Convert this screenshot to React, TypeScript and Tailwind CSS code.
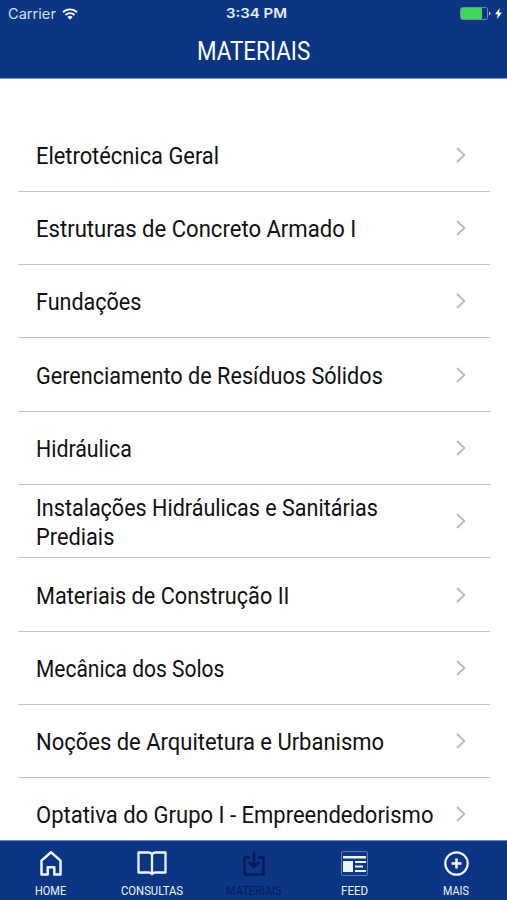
import { useLayoutEffect, useRef, useState } from "react";
import type { ReactNode } from "react";

/** A line of text condensed horizontally so that it fills the given width. */
function FitText({ text, width }: { text: string; width: number }) {
  const ref = useRef<HTMLSpanElement>(null);
  const [scale, setScale] = useState(1);
  useLayoutEffect(() => {
    if (ref.current) setScale(width / ref.current.offsetWidth);
  }, [text, width]);
  return (
    <span className="block" style={{ width }}>
      <span
        ref={ref}
        className="inline-block origin-left whitespace-nowrap"
        style={{ transform: `scaleX(${scale})` }}
      >
        {text}
      </span>
    </span>
  );
}

type Line = { text: string; width: number };

const subjects: Line[][] = [
  [{ text: "Eletrotécnica Geral", width: 183 }],
  [{ text: "Estruturas de Concreto Armado I", width: 320 }],
  [{ text: "Fundações", width: 105 }],
  [{ text: "Gerenciamento de Resíduos Sólidos", width: 347 }],
  [{ text: "Hidráulica", width: 96 }],
  [
    { text: "Instalações Hidráulicas e Sanitárias", width: 342 },
    { text: "Prediais", width: 78 },
  ],
  [{ text: "Materiais de Construção II", width: 253 }],
  [{ text: "Mecânica dos Solos", width: 188 }],
  [{ text: "Noções de Arquitetura e Urbanismo", width: 348 }],
  [{ text: "Optativa do Grupo I - Empreendedorismo", width: 397 }],
];

function StatusBar() {
  return (
    <div className="grid h-[27px] grid-cols-3 items-center pl-[8px] pr-[5px] text-[14px] leading-none">
      <div className="flex items-center gap-[6px] text-[#d5e0f4]">
        <div className="font-['Inter','Liberation_Sans',sans-serif]">
          <FitText text="Carrier" width={48} />
        </div>
        <svg width="16" height="12" viewBox="0 0 16 12" fill="none" stroke="#fff" strokeWidth="1.9">
          <path d="M1 4.2a10 10 0 0 1 14 0M3.5 7a6.4 6.4 0 0 1 9 0" />
          <path d="M5.4 9.1a3.7 3.7 0 0 1 5.2 0L8 11.7z" fill="#fff" stroke="none" />
        </svg>
      </div>
      <div className="flex justify-center pl-[3px] font-['Inter','Liberation_Sans',sans-serif] text-[13px] font-semibold text-[#e6edfb]">
        <FitText text="3:34 PM" width={61} />
      </div>
      <div className="flex items-center justify-end gap-[4px]">
        <svg width="31" height="13" viewBox="0 0 31 13">
          <rect x="0.5" y="0.5" width="27" height="12" rx="2" fill="none" stroke="#7187b9" />
          <rect x="1" y="1" width="21" height="11" rx="1" fill="#42d657" />
          <path d="M29 4.5q1.500.4 1.500 2t-1.500 2z" fill="#b5c3e0" />
        </svg>
        <svg width="7" height="11" viewBox="0 0 7 11" fill="#fff">
          <path d="M4.800 0 0 6.200h2.800L2 11l5-6.600H4z" />
        </svg>
      </div>
    </div>
  );
}

function Tab({ label, width, active, children }: { label: string; width: number; active?: boolean; children: ReactNode }) {
  return (
    <div className={`flex flex-1 flex-col items-center ${active ? "text-[#071b58]" : "text-[#edf4ff]"}`}>
      <div className="flex h-[43px] items-center pt-[2px]">{children}</div>
      <div className="text-[12px] leading-[15px]">
        <FitText text={label} width={width} />
      </div>
    </div>
  );
}

export default function App() {
  return (
    <div className="flex h-[900px] w-[507px] flex-col overflow-hidden bg-white font-['Roboto','Liberation_Sans',sans-serif]">
      <header className="h-[79px] shrink-0 border-b border-[#7d95c8] bg-[#0c3583] text-white">
        <StatusBar />
        <h1 className="flex justify-center pt-px text-[25px] leading-[47px]">
          <FitText text="MATERIAIS" width={113} />
        </h1>
      </header>

      <main className="min-h-0 flex-1 overflow-hidden pl-[18px] pr-[17px] pt-[39.6px] text-[24px] leading-[29px] text-[#111]">
        {subjects.map((lines) => (
          <div
            key={lines[0].text}
            className="flex h-[73.3px] items-center justify-between border-b border-[#c4c4c4] pl-[17.5px] pr-[24px]"
          >
            <div className="pt-[3px]">
              {lines.map((line) => (
                <FitText key={line.text} text={line.text} width={line.width} />
              ))}
            </div>
            <svg width="10" height="16" viewBox="0 0 10 16" fill="none" stroke="#bdbdbd" strokeWidth="2">
              <path d="m1 1 7.300 7L1 15" />
            </svg>
          </div>
        ))}
      </main>

      <nav className="flex h-[60px] shrink-0 border-t border-[#6d86b8] bg-[#0c3583]">
        <Tab label="HOME" width={31}>
          <svg width="22" height="25" viewBox="0 0 22 25" fill="none" stroke="currentColor" strokeWidth="2.500" strokeLinejoin="round">
            <path d="M1.500 9.600 11 1.300l9.500 8.300V23.500h-6.200v-7.300H7.700v7.300H1.500z" />
          </svg>
        </Tab>
        <Tab label="CONSULTAS" width={62}>
          <svg width="30" height="25" viewBox="0 0 30 25" fill="none" stroke="currentColor" strokeWidth="2.300" strokeLinejoin="round">
            <path d="M15 3.200Q13.500 1.500 11.500 1.500H1.500v20h10q2 0 3.500 1.700 1.500-1.700 3.500-1.700h10v-20h-10Q16.500 1.500 15 3.200zV23" />
          </svg>
        </Tab>
        <Tab label="MATERIAIS" width={56} active>
          <svg width="22" height="25" viewBox="0 0 22 25" fill="none" stroke="currentColor" strokeWidth="2.500" strokeLinejoin="round">
            <path d="M7 6.500H1.500v17h19v-17H15M11 .5V16M6 11l5 5 5-5" />
          </svg>
        </Tab>
        <Tab label="FEED" width={27}>
          <svg width="27" height="25" viewBox="0 0 27 25">
            <rect x="0.500" y="0.500" width="26" height="24" rx="1.500" fill="none" stroke="#5f7cb4" />
            <path d="M2 5h23v2.500H2zM2 10h10v11H2zM14 10h11v2H14zM14 14.500h8v2h-8zM14 19h11v2H14z" fill="currentColor" />
          </svg>
        </Tab>
        <Tab label="MAIS" width={26}>
          <svg width="25" height="25" viewBox="0 0 25 25" fill="none" stroke="currentColor" strokeWidth="2.200">
            <circle cx="12.500" cy="12.500" r="11.200" />
            <path d="M12.500 7.500v10M7.500 12.500h10" strokeWidth="2.600" />
          </svg>
        </Tab>
      </nav>
    </div>
  );
}
